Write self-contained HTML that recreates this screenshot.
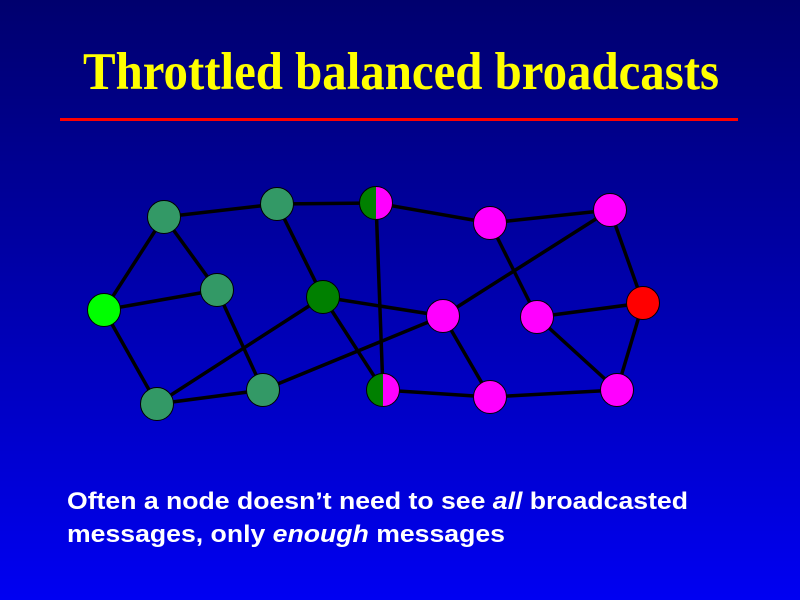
<!DOCTYPE html>
<html><head><meta charset="utf-8"><style>
html,body{margin:0;padding:0;}
body{width:800px;height:600px;overflow:hidden;background:linear-gradient(#00006e 0%,#0000a8 45%,#0000f2 100%);}
</style></head><body>
<svg width="800" height="600" xmlns="http://www.w3.org/2000/svg" style="position:absolute;left:0;top:0">
<text x="83" y="89" font-family="Liberation Serif, serif" font-weight="bold" font-size="53" fill="#ffff00" textLength="636" lengthAdjust="spacingAndGlyphs">Throttled balanced broadcasts</text>
<rect x="60" y="118" width="678" height="3" fill="#ff0000"/>
<g stroke="#000" stroke-width="3.5">
<line x1="164" y1="217" x2="277" y2="204"/>
<line x1="277" y1="204" x2="376" y2="203"/>
<line x1="376" y1="203" x2="490" y2="223"/>
<line x1="490" y1="223" x2="610" y2="210"/>
<line x1="164" y1="217" x2="104" y2="310"/>
<line x1="164" y1="217" x2="217" y2="290"/>
<line x1="104" y1="310" x2="217" y2="290"/>
<line x1="104" y1="310" x2="157" y2="404"/>
<line x1="217" y1="290" x2="263" y2="390"/>
<line x1="277" y1="204" x2="323" y2="297"/>
<line x1="323" y1="297" x2="443" y2="316"/>
<line x1="323" y1="297" x2="383" y2="390"/>
<line x1="323" y1="297" x2="157" y2="404"/>
<line x1="376" y1="203" x2="383" y2="390"/>
<line x1="157" y1="404" x2="263" y2="390"/>
<line x1="263" y1="390" x2="443" y2="316"/>
<line x1="443" y1="316" x2="610" y2="210"/>
<line x1="443" y1="316" x2="490" y2="397"/>
<line x1="383" y1="390" x2="490" y2="397"/>
<line x1="490" y1="397" x2="617" y2="390"/>
<line x1="490" y1="223" x2="537" y2="317"/>
<line x1="537" y1="317" x2="643" y2="303"/>
<line x1="610" y1="210" x2="643" y2="303"/>
<line x1="643" y1="303" x2="617" y2="390"/>
<line x1="537" y1="317" x2="617" y2="390"/>
</g>
<g stroke="#000" stroke-width="1">
<circle cx="164" cy="217" r="16.5" fill="#339966"/>
<circle cx="277" cy="204" r="16.5" fill="#339966"/>
<circle cx="490" cy="223" r="16.5" fill="#ff00ff"/>
<circle cx="610" cy="210" r="16.5" fill="#ff00ff"/>
<circle cx="104" cy="310" r="16.5" fill="#00ff00"/>
<circle cx="217" cy="290" r="16.5" fill="#339966"/>
<circle cx="323" cy="297" r="16.5" fill="#008000"/>
<circle cx="443" cy="316" r="16.5" fill="#ff00ff"/>
<circle cx="537" cy="317" r="16.5" fill="#ff00ff"/>
<circle cx="643" cy="303" r="16.5" fill="#ff0000"/>
<circle cx="157" cy="404" r="16.5" fill="#339966"/>
<circle cx="263" cy="390" r="16.5" fill="#339966"/>
<circle cx="490" cy="397" r="16.5" fill="#ff00ff"/>
<circle cx="617" cy="390" r="16.5" fill="#ff00ff"/>
<path d="M376 186.5 A16.5 16.5 0 0 0 376 219.5 Z" fill="#008000" stroke="none"/>
<path d="M376 186.5 A16.5 16.5 0 0 1 376 219.5 Z" fill="#ff00ff" stroke="none"/>
<circle cx="376" cy="203" r="16.5" fill="none"/>
<path d="M383 373.5 A16.5 16.5 0 0 0 383 406.5 Z" fill="#008000" stroke="none"/>
<path d="M383 373.5 A16.5 16.5 0 0 1 383 406.5 Z" fill="#ff00ff" stroke="none"/>
<circle cx="383" cy="390" r="16.5" fill="none"/>
</g>
<g font-family="Liberation Sans, Arial, sans-serif" font-weight="bold" font-size="24" fill="#fff">
<text x="67" y="509" textLength="621" lengthAdjust="spacingAndGlyphs">Often a node doesn’t need to see <tspan font-style="italic">all</tspan> broadcasted</text>
<text x="67" y="542" textLength="438" lengthAdjust="spacingAndGlyphs">messages, only <tspan font-style="italic">enough</tspan> messages</text>
</g>
</svg>
</body></html>
